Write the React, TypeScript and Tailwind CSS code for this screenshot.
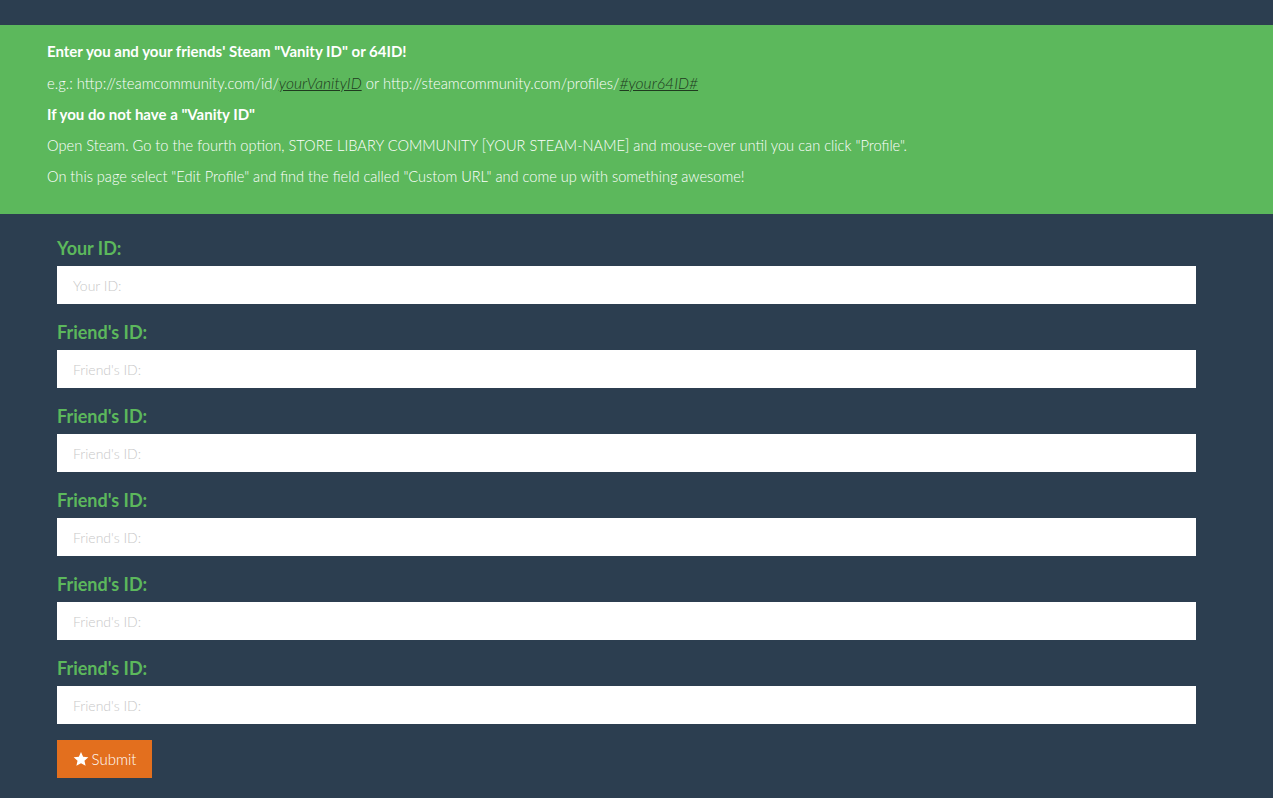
import React from "react";

const Star = () => (
  <svg width="16" height="16" viewBox="0 0 24 24" className="mr-[3px]" fill="#fff">
    <path d="M12 1.5l3.2 7.1 7.8.8-5.8 5.2 1.7 7.7L12 18.4l-6.9 3.9 1.7-7.7L1 9.4l7.8-.8z" />
  </svg>
);

export default function App() {
  const friends = [1, 2, 3, 4, 5];
  return (
    <div className="min-h-[798px] bg-[#2c3e50] font-['Lato','Open_Sans',sans-serif]">
      <div className="h-[25px]" />
      <div className="bg-[#5cb85c] h-[189px] pl-[47px] pt-[16px] text-white">
        <p className="font-bold h-[31.5px] leading-[20px] text-[15px]">Enter you and your friends' Steam "Vanity ID" or 64ID!</p>
        <p className="font-light h-[31.5px] leading-[20px] text-[14.8px]">
          e.g.: http://steamcommunity.com/id/
          <span className="italic underline text-[#1f3b1f] text-[15.6px]">yourVanityID</span> or http://steamcommunity.com/profiles/
          <span className="italic underline text-[#1f3b1f] text-[15.6px]">#your64ID#</span>
        </p>
        <p className="font-bold h-[31.5px] leading-[20px] text-[15px]">If you do not have a "Vanity ID"</p>
        <p className="font-light h-[31.5px] leading-[20px] text-[14.65px]">
          Open Steam. Go to the fourth option, STORE LIBARY COMMUNITY [YOUR STEAM-NAME] and mouse-over until you can click "Profile".
        </p>
        <p className="font-light h-[31.5px] leading-[20px] text-[14.6px]">
          On this page select "Edit Profile" and find the field called "Custom URL" and come up with something awesome!
        </p>
      </div>
      <div className="pl-[57px] w-[1196px] pt-[23px] pb-[20px]">
        <label className="block text-[#5cb85c] font-bold text-[18px] leading-[22px] mb-[7px]">Your ID:</label>
        <input
          placeholder="Your ID:"
          className="block w-full h-[38px] bg-white px-[16px] text-[14px] font-light placeholder:text-[#c8c8c8] outline-none"
        />
        {friends.map((i) => (
          <div key={i}>
            <label className="block text-[#5cb85c] font-bold text-[18px] leading-[22px] mt-[17px] mb-[7px]">Friend's ID:</label>
            <input
              placeholder="Friend's ID:"
              className="block w-full h-[38px] bg-white px-[16px] text-[14px] font-light placeholder:text-[#c8c8c8] outline-none"
            />
          </div>
        ))}
        <button className="mt-[16px] h-[38px] w-[95px] bg-[#e36f1e] text-white text-[15px] font-light flex items-center justify-center">
          <Star />
          Submit
        </button>
      </div>
    </div>
  );
}
